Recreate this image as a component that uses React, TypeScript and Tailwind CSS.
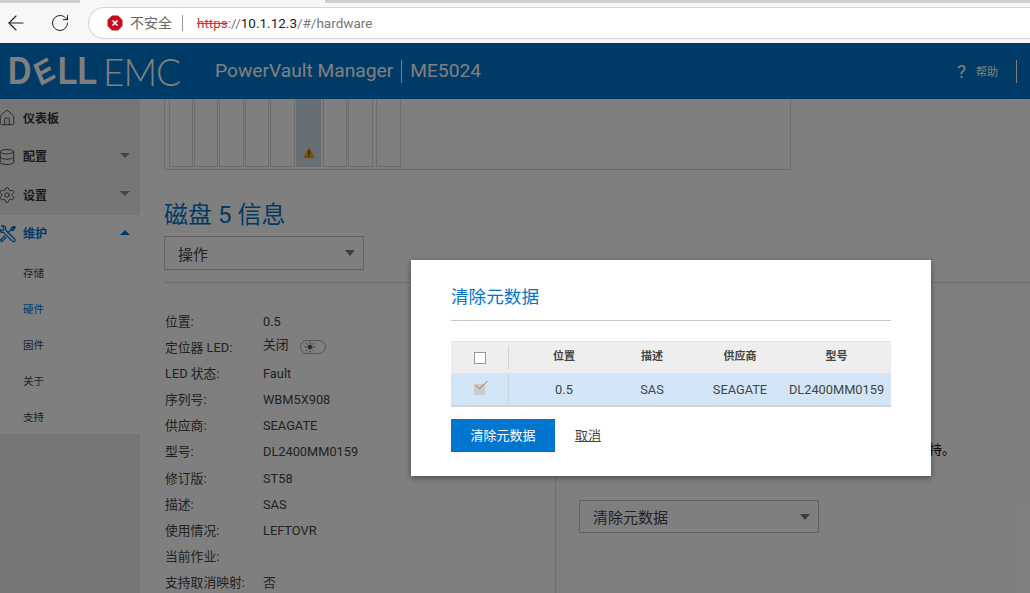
import { ArrowLeft, RotateCw, Home, Database, Settings, Check, Sun } from 'lucide-react';

const font = '[font-family:Roboto,"Noto_Sans_CJK_SC",sans-serif]';

const details: [string, string][] = [
  ['位置:', '0.5'],
  ['定位器 LED:', '关闭'],
  ['LED 状态:', 'Fault'],
  ['序列号:', 'WBM5X908'],
  ['供应商:', 'SEAGATE'],
  ['型号:', 'DL2400MM0159'],
  ['修订版:', 'ST58'],
  ['描述:', 'SAS'],
  ['使用情况:', 'LEFTOVR'],
  ['当前作业:', ''],
  ['支持取消映射:', '否'],
];

function Caret({ up }: { up?: boolean }) {
  if (up) return <span className="h-0 w-0 border-x-[5.5px] border-b-[5px] border-x-transparent border-b-[#0076ce]" />;
  return <span className="h-0 w-0 border-x-[5.5px] border-t-[5px] border-x-transparent border-t-[#8c8c8c]" />;
}

function ToolsIcon() {
  return (
    <svg viewBox="0 0 18 18" width="18" height="18" fill="none" stroke="currentColor" strokeWidth="1.3" strokeLinejoin="round">
      <path d="M1 3.5l2.2 2.2 2-.6.6-2L3.6.9c2-.7 4 .4 4.1 2.4 0 .6-.1 1.1-.3 1.5l9 9c.8.8.8 1.7.2 2.4-.7.7-1.7.6-2.4-.1l-9-9c-2.2.8-4.6-.9-4.2-3.6z" />
      <path d="M16.6 1l-3.4 2.1-.3 1.6-3.4 3.4M7 10.6l-4.7 4.6 1.4 1.5L8.400 12M12.900 4.700l1 .9 1.600-.4L17.400 2z" />
    </svg>
  );
}

function NavRow({ icon, label, caret, active, shift }: { icon: React.ReactNode; label: string; caret?: 'up' | 'down'; active?: boolean; shift?: boolean }) {
  return (
    <div className="flex h-[38.5px] items-center">
      <span className={`ml-[-2px] flex w-[25px] ${active ? 'text-[#0076ce]' : 'text-[#444]'}`}>{icon}</span>
      <span className={`text-xs font-bold ${shift ? 'pt-[2px]' : ''} ${active ? 'text-[#0076ce]' : 'text-[#333]'}`}>{label}</span>
      <span className="ml-auto mr-[10px] flex pb-[3px]">{caret && <Caret up={caret === 'up'} />}</span>
    </div>
  );
}

function Select({ label, width, className }: { label: string; width: string; className?: string }) {
  return (
    <div className={`flex items-center justify-between border border-[#c4c4c4] bg-white pl-[13px] pr-[8px] pt-[4px] text-[15px] text-[#444] ${width} ${className}`}>
      {label}
      <span className="mb-[4px] h-0 w-0 border-x-[5.5px] border-t-[6px] border-x-transparent border-t-[#7a7a7a]" />
    </div>
  );
}

export default function App() {
  const slots = ['w-[24px]', 'w-[24px]', 'w-[25px]', 'w-[24px]', 'w-[25px]', 'w-[25px]', 'ml-[1px] w-[24px]', 'w-[25px]', 'ml-[2px] w-[25px]'];

  return (
    <div className={`relative h-[593px] w-[1030px] overflow-hidden bg-white ${font}`}>
      {/* browser bar */}
      <div className="h-[43px] bg-[#f7f7f7]">
        <div className="flex h-[3px] bg-[#cfcfcf]">
          <div className="ml-[80px] w-[245px] bg-[#f7f7f7]" />
        </div>
        <div className="flex items-center pt-[4px]">
          <ArrowLeft className="ml-[4px] h-[24px] w-[24px] text-[#222]" strokeWidth={1.1} />
          <RotateCw className="ml-[22px] h-[20px] w-[20px] text-[#222]" strokeWidth={1.2} />
          <div className="ml-[18px] flex h-[32px] flex-1 items-center rounded-l-full border border-r-0 border-[#d4d4d4] bg-white pl-[18px] text-[14px]">
            <svg viewBox="0 0 16 16" className="h-[16px] w-[16px]">
              <polygon points="5,0.5 11,0.5 15.5,5 15.5,11 11,15.5 5,15.5 0.5,11 0.5,5" fill="#c50f1f" />
              <path d="M5.5 5.500l5 5M10.500 5.500l-5 5" stroke="#fff" strokeWidth="1.6" />
            </svg>
            <span className="ml-[7px] text-[#666]">不安全</span>
            <span className="ml-[10px] h-[16px] w-px bg-[#999]" />
            <span className="ml-[14px] text-[13.5px] text-[#d13438] line-through">https</span>
            <span className="text-[13.5px] text-[#777]">://</span>
            <span className="text-[13.5px] text-[#222]">10.1.12.3</span>
            <span className="text-[13.5px] text-[#777]">/#/hardware</span>
          </div>
        </div>
      </div>

      {/* app header */}
      <div className="flex h-[56px] items-center bg-[#0076ce] text-white">
        <div className="ml-[8px] flex w-[89px] shrink-0 origin-left scale-x-[.85] items-center text-[38px] font-bold leading-none [font-family:'Liberation_Sans',sans-serif]">
          <span>D</span>
          <span className="inline-block w-[31px] shrink-0 -rotate-[25deg] text-center text-[33px]">E</span>
          <span>LL</span>
        </div>
        <span className="ml-[6px] w-[77px] shrink-0 text-[37px] font-light leading-none tracking-[-1px] [font-family:Lato,sans-serif]">EMC</span>
        <span className="ml-[35px] text-[19.2px]">PowerVault Manager</span>
        <span className="ml-[8px] h-[23px] w-px bg-white" />
        <span className="ml-[8px] text-[19.2px]">ME5024</span>
        <span className="ml-auto text-[19px] leading-none">?</span>
        <span className="ml-[10px] pt-[5px] text-[11px]">帮助</span>
        <span className="ml-[18px] mr-[13px] h-[23px] w-px bg-white" />
      </div>

      <div className="flex h-[494px]">
        {/* sidebar */}
        <div className="w-[140px] shrink-0 bg-[#ececec]">
          <NavRow icon={<Home size={18} strokeWidth={1.2} />} label="仪表板" shift />
          <NavRow icon={<Database size={18} strokeWidth={1.2} />} label="配置" caret="down" />
          <NavRow icon={<Settings size={18} strokeWidth={1.2} />} label="设置" caret="down" shift />
          <div className="h-[219px] overflow-hidden bg-white">
            <NavRow icon={<ToolsIcon />} label="维护" caret="up" active />
            <div className="pt-[2.5px] pl-[23px] text-[10.5px] text-[#444]">
              <div className="flex h-9 items-center">存储</div>
              <div className="flex h-9 items-center text-[#0076ce]">硬件</div>
              <div className="flex h-9 items-center">固件</div>
              <div className="flex h-9 items-center">关于</div>
              <div className="flex h-9 items-center">支持</div>
            </div>
          </div>
        </div>

        {/* main */}
        <div className="min-w-0 flex-1 pl-[24px]">
          <div className="flex h-[71px] w-[627px] gap-[1px] border border-t-0 border-[#d8d8d8] pl-[4px] pb-[2px]">
            {slots.map((w, i) => (
              <div key={i} className={`flex items-end justify-center border border-t-0 pb-[8px] ${w} ${i === 5 ? 'border-[#cfdce8] bg-[#cfdce8]' : 'border-[#d8d8d8]'}`}>
                {i === 5 && (
                  <svg viewBox="0 0 12 11" className="h-[11px] w-[12px]">
                    <polygon points="6,0 12,11 0,11" fill="#f0a800" />
                    <rect x="5.4" y="3.5" width="1.2" height="4" fill="#222" />
                    <rect x="5.4" y="8.3" width="1.2" height="1.3" fill="#222" />
                  </svg>
                )}
              </div>
            ))}
          </div>
          <h1 className="mt-[30px] text-[24px] leading-[30px] text-[#0076ce]">磁盘 5 信息</h1>
          <div className="mt-[6px]">
            <Select label="操作" width="w-[200px]" className="h-[34px]" />
          </div>
          <div className="mt-[12px] flex border-t border-[#dcdcdc]">
            <div className="h-[400px] w-[392px] border-r border-[#dcdcdc] pt-[25px]">
              {details.map(([k, v]) => (
                <div key={k} className="grid h-[26.2px] grid-cols-[99px_1fr] items-center text-[12.8px] text-[#444]">
                  <span className="pl-px">{k}</span>
                  {k === '定位器 LED:' ? (
                    <span className="flex items-center">
                      <span className="mb-[6px]">{v}</span>
                      <span className="ml-[11px] flex h-[14px] w-[26px] items-center rounded-full border border-[#aaa] pl-[3px] text-[#555]">
                        <Sun size={12} fill="currentColor" strokeWidth={1.8} />
                      </span>
                    </span>
                  ) : (
                    <span>{v}</span>
                  )}
                </div>
              ))}
            </div>
            <div className="pl-[23px] text-[13px] text-black">
              <p className="ml-[350px] mt-[158px] leading-[18px]">持。</p>
              <div className="mt-[41px]">
                <Select label="清除元数据" width="w-[240px]" className="h-[33px]" />
              </div>
            </div>
          </div>
        </div>
      </div>

      {/* dim layer */}
      <div className="absolute inset-x-0 bottom-0 top-[43px] bg-black/50" />

      {/* dialog */}
      <div className="absolute left-[411px] top-[260px] h-[216px] w-[520px] bg-white px-[40px] pt-[26px] shadow-[0_2px_6px_rgba(0,0,0,0.4)]">
        <h2 className="h-[34px] text-[17.6px] leading-[22px] text-[#0076ce]">清除元数据</h2>
        <div className="h-px bg-[#c8c8c8]" />
        <div className="mt-[20px] text-[11px] text-[#444]">
          <div className="flex h-[33px] items-center border-y border-[#e2e2e2] bg-[#eee] font-bold">
            <div className="flex h-[23px] w-[58px] items-center justify-center border-r border-[#d4d4d4]">
              <span className="h-[12px] w-[12px] border border-[#999] bg-white" />
            </div>
            <div className="w-[11px]" />
            <div className="w-[88px] text-center">位置</div>
            <div className="w-[88px] text-center">描述</div>
            <div className="w-[88px] text-center">供应商</div>
            <div className="w-[105px] text-center">型号</div>
          </div>
          <div className="flex h-[33px] items-center border-b-2 border-[#d4d4d4] bg-[#d2e6f7] text-[12.8px]">
            <div className="relative flex h-full w-[58px] items-center justify-center border-r border-[#c8d4de]">
              <span className="h-[11px] w-[11px] bg-[#ccc]" />
              <Check className="absolute left-[22px] top-[3px] h-[17px] w-[17px] text-[#555]" strokeWidth={1} />
            </div>
            <div className="w-[11px]" />
            <div className="w-[88px] text-center">0.5</div>
            <div className="w-[88px] text-center">SAS</div>
            <div className="w-[88px] text-center">SEAGATE</div>
            <div className="w-[105px] text-center">DL2400MM0159</div>
          </div>
        </div>
        <div className="mt-[12px] flex items-center">
          <button className="h-[33px] w-[104px] bg-[#0076ce] text-[13px] text-white">清除元数据</button>
          <a className="ml-[20px] text-[13px] text-[#444] underline">取消</a>
        </div>
      </div>
    </div>
  );
}
